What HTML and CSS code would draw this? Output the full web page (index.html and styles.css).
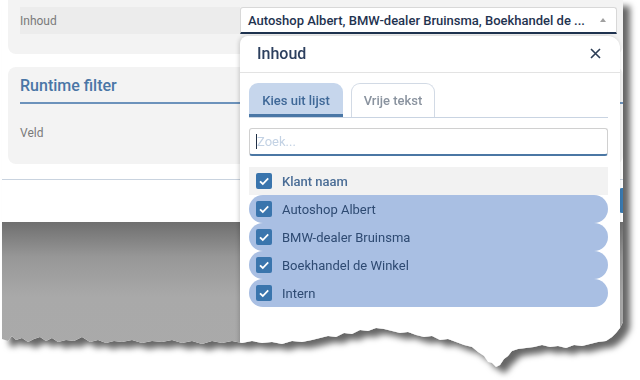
FILE: index.html
```html
<!DOCTYPE html>
<html>
<head>
<meta charset="utf-8">
<link rel="stylesheet" href="styles.css">
</head>
<body>
<div class="frame">
  <div class="paper">
    <div class="page">
      <section class="panel panel-top">
        <div class="field">
          <span class="field-label">Inhoud</span>
          <div class="select">
            <span class="select-text">Autoshop Albert, BMW-dealer Bruinsma, Boekhandel de ...</span>
            <span class="caret"></span>
          </div>
        </div>
      </section>
      <section class="panel panel-filter">
        <h2 class="panel-title">Runtime filter</h2>
        <div class="veld">Veld</div>
      </section>
      <div class="footer"><span class="btn"></span></div>
      <div class="backdrop"></div>
    </div>

    <div class="popup">
      <div class="popup-head">
        <span class="popup-title">Inhoud</span>
        <svg class="close" width="11" height="11" viewBox="0 0 11 11"><path d="M1 1 L10 10 M10 1 L1 10" stroke="#2c3d55" stroke-width="1.6" fill="none"/></svg>
      </div>
      <div class="popup-body">
        <div class="tabs">
          <div class="tab tab-active">Kies uit lijst</div>
          <div class="tab">Vrije tekst</div>
        </div>
        <div class="search"><span class="cursor"></span><span class="placeholder">Zoek...</span></div>
        <div class="list">
          <div class="row row-head">
            <span class="check"><svg width="16" height="16" viewBox="0 0 16 16"><path d="M4 8.3 L6.8 11 L12.2 5.4" stroke="#fff" stroke-width="1.8" fill="none"/></svg></span>
            <span>Klant naam</span>
          </div>
          <div class="row row-item">
            <span class="check"><svg width="16" height="16" viewBox="0 0 16 16"><path d="M4 8.3 L6.8 11 L12.2 5.4" stroke="#fff" stroke-width="1.8" fill="none"/></svg></span>
            <span>Autoshop Albert</span>
          </div>
          <div class="row row-item">
            <span class="check"><svg width="16" height="16" viewBox="0 0 16 16"><path d="M4 8.3 L6.8 11 L12.2 5.4" stroke="#fff" stroke-width="1.8" fill="none"/></svg></span>
            <span>BMW-dealer Bruinsma</span>
          </div>
          <div class="row row-item">
            <span class="check"><svg width="16" height="16" viewBox="0 0 16 16"><path d="M4 8.3 L6.8 11 L12.2 5.4" stroke="#fff" stroke-width="1.8" fill="none"/></svg></span>
            <span>Boekhandel de Winkel</span>
          </div>
          <div class="row row-item">
            <span class="check"><svg width="16" height="16" viewBox="0 0 16 16"><path d="M4 8.3 L6.8 11 L12.2 5.4" stroke="#fff" stroke-width="1.8" fill="none"/></svg></span>
            <span>Intern</span>
          </div>
        </div>
      </div>
    </div>
  </div>
</div>
</body>
</html>
```

FILE: styles.css
```css
* { box-sizing: border-box; }
html, body { margin: 0; padding: 0; background: #fff; }
body { width: 640px; height: 380px; overflow: hidden; font-family: Roboto, "Liberation Sans", sans-serif; }

.frame {
  padding-left: 2px;
  filter: drop-shadow(7px 6px 3px rgba(0,0,0,0.6));
}

.paper {
  position: relative;
  width: 621px;
  height: 380px;
  background: #fff;
  overflow: hidden;
  clip-path: polygon(0 0, 621px 0, 621px 322px, 618px 328px, 614px 333px, 610px 337px, 604px 341px, 596px 342px, 588px 344px, 580px 346px, 572px 345px, 564px 348px, 556px 346px, 548px 347px, 540px 345px, 532px 347px, 524px 348px, 516px 349px, 510px 351px, 506px 356px, 502px 359px, 498px 365px, 494px 367px, 490px 363px, 486px 362px, 482px 356px, 476px 352px, 470px 347px, 462px 345px, 454px 342px, 446px 339px, 438px 340px, 430px 336px, 422px 337px, 414px 335px, 406px 332px, 398px 333px, 390px 331px, 382px 329px, 374px 328px, 366px 331px, 358px 330px, 350px 334px, 342px 333px, 334px 337px, 326px 336px, 318px 338px, 310px 340px, 300px 342px, 290px 341px, 280px 344px, 270px 342px, 260px 343px, 250px 341px, 240px 343px, 230px 341px, 220px 343px, 210px 341px, 200px 344px, 190px 341px, 180px 343px, 170px 340px, 160px 342px, 150px 341px, 140px 343px, 130px 340px, 120px 342px, 112px 341px, 104px 343px, 96px 340px, 88px 342px, 80px 337px, 72px 341px, 64px 340px, 56px 342px, 50px 338px, 44px 341px, 38px 337px, 32px 339px, 26px 342px, 20px 338px, 14px 340px, 10px 336px, 6px 341px, 0 339px);
}

.page {
  height: 100%;
  display: flex;
  flex-direction: column;
}

.panel {
  margin-left: 6px;
  background: #f3f3f3;
}

.panel-top {
  padding: 7px 6px 20px 12px;
  border-radius: 0 0 8px 8px;
}

.field { display: flex; height: 27px; }

.field-label {
  width: 220px;
  background: #ececec;
  color: #7a7a7a;
  font-size: 12px;
  display: flex;
  align-items: center;
}

.select {
  flex: 1;
  background: #fff;
  border: 1px solid #d8d8d8;
  border-bottom: 2px solid #1f3350;
  border-radius: 3px 3px 0 0;
  display: flex;
  align-items: center;
  justify-content: space-between;
  padding: 0 10px 0 7px;
}

.select-text {
  font-size: 13px;
  font-weight: 500;
  color: #1f3350;
  white-space: nowrap;
}

.caret {
  width: 0; height: 0;
  border-left: 3px solid transparent;
  border-right: 3px solid transparent;
  border-bottom: 4px solid #a0a0a0;
}

.panel-filter {
  margin-top: 13px;
  height: 97px;
  border-radius: 8px;
  padding: 9px 0 0 12px;
}

.panel-title {
  margin: 0;
  font-size: 16px;
  font-weight: 500;
  color: #4a76a6;
  line-height: 20px;
  padding-bottom: 6px;
  border-bottom: 2px solid #6c92bb;
}

.veld {
  margin-top: 21px;
  font-size: 12px;
  color: #7a7a7a;
  line-height: 16px;
}

.footer {
  margin-top: 15px;
  height: 43px;
  border-top: 1px solid #c9d3df;
  display: flex;
  justify-content: flex-end;
  align-items: flex-start;
}

.btn {
  display: block;
  width: 30px;
  height: 25px;
  margin-top: 8px;
  margin-right: -26px;
  background: #3a7ab0;
  border-radius: 3px;
}

.backdrop {
  flex: 1;
  background: linear-gradient(#6f6f6f 0, #979797 35px, #a9a9a9 75px, #aaaaaa 100%);
}

/* Popup */
.popup {
  position: absolute;
  left: 238px;
  top: 36px;
  width: 380px;
  bottom: 0;
  background: #fff;
  border-radius: 8px 12px 0 0;
  box-shadow: -1px 0 4px rgba(0,0,0,0.18);
}

.popup-head {
  height: 37px;
  display: flex;
  align-items: center;
  justify-content: space-between;
  padding: 0 19px 1px 17px;
  border-bottom: 1px solid #e3e3e3;
}

.popup-title {
  font-size: 16px;
  font-weight: 500;
  color: #2c3f5e;
}

.popup-body {
  padding: 10px 12px 0 9px;
}

.tabs {
  display: flex;
  gap: 8px;
  height: 35px;
  border-bottom: 1px solid #c9d4e2;
}

.tab {
  height: 34px;
  border-radius: 9px 9px 0 0;
  font-size: 13px;
  font-weight: 500;
  display: flex;
  align-items: center;
  justify-content: center;
  color: #8a939f;
  width: 84px;
  border: 1px solid #d2dae5;
  border-bottom: none;
  background: #fff;
}

.tab-active {
  width: 94px;
  background: #c6d6ec;
  color: #3f6897;
  border: none;
  border-bottom: 3px solid #4a77a6;
  padding-top: 3px;
}

.search {
  margin-top: 10px;
  height: 28px;
  border: 1px solid #d0d0d0;
  border-bottom: 2px solid #4b77a4;
  border-radius: 3px;
  display: flex;
  align-items: center;
  padding-left: 6px;
}

.cursor {
  width: 1px;
  height: 15px;
  background: #1f2f45;
}

.placeholder {
  font-size: 13px;
  color: #c3d2e4;
}

.list {
  margin-top: 11px;
  display: flex;
  flex-direction: column;
}

.row {
  height: 28px;
  display: flex;
  align-items: center;
  gap: 10px;
  padding-left: 7px;
  font-size: 13px;
}

.row-head {
  background: #f2f2f2;
  color: #4a6d96;
  font-weight: 500;
}

.row-item {
  background: #a9bfe3;
  color: #2e4a72;
  border-radius: 14px;
}

.check {
  width: 16px;
  height: 16px;
  background: #3a75ad;
  border-radius: 2px;
  display: block;
}
.check svg { display: block; }
```
